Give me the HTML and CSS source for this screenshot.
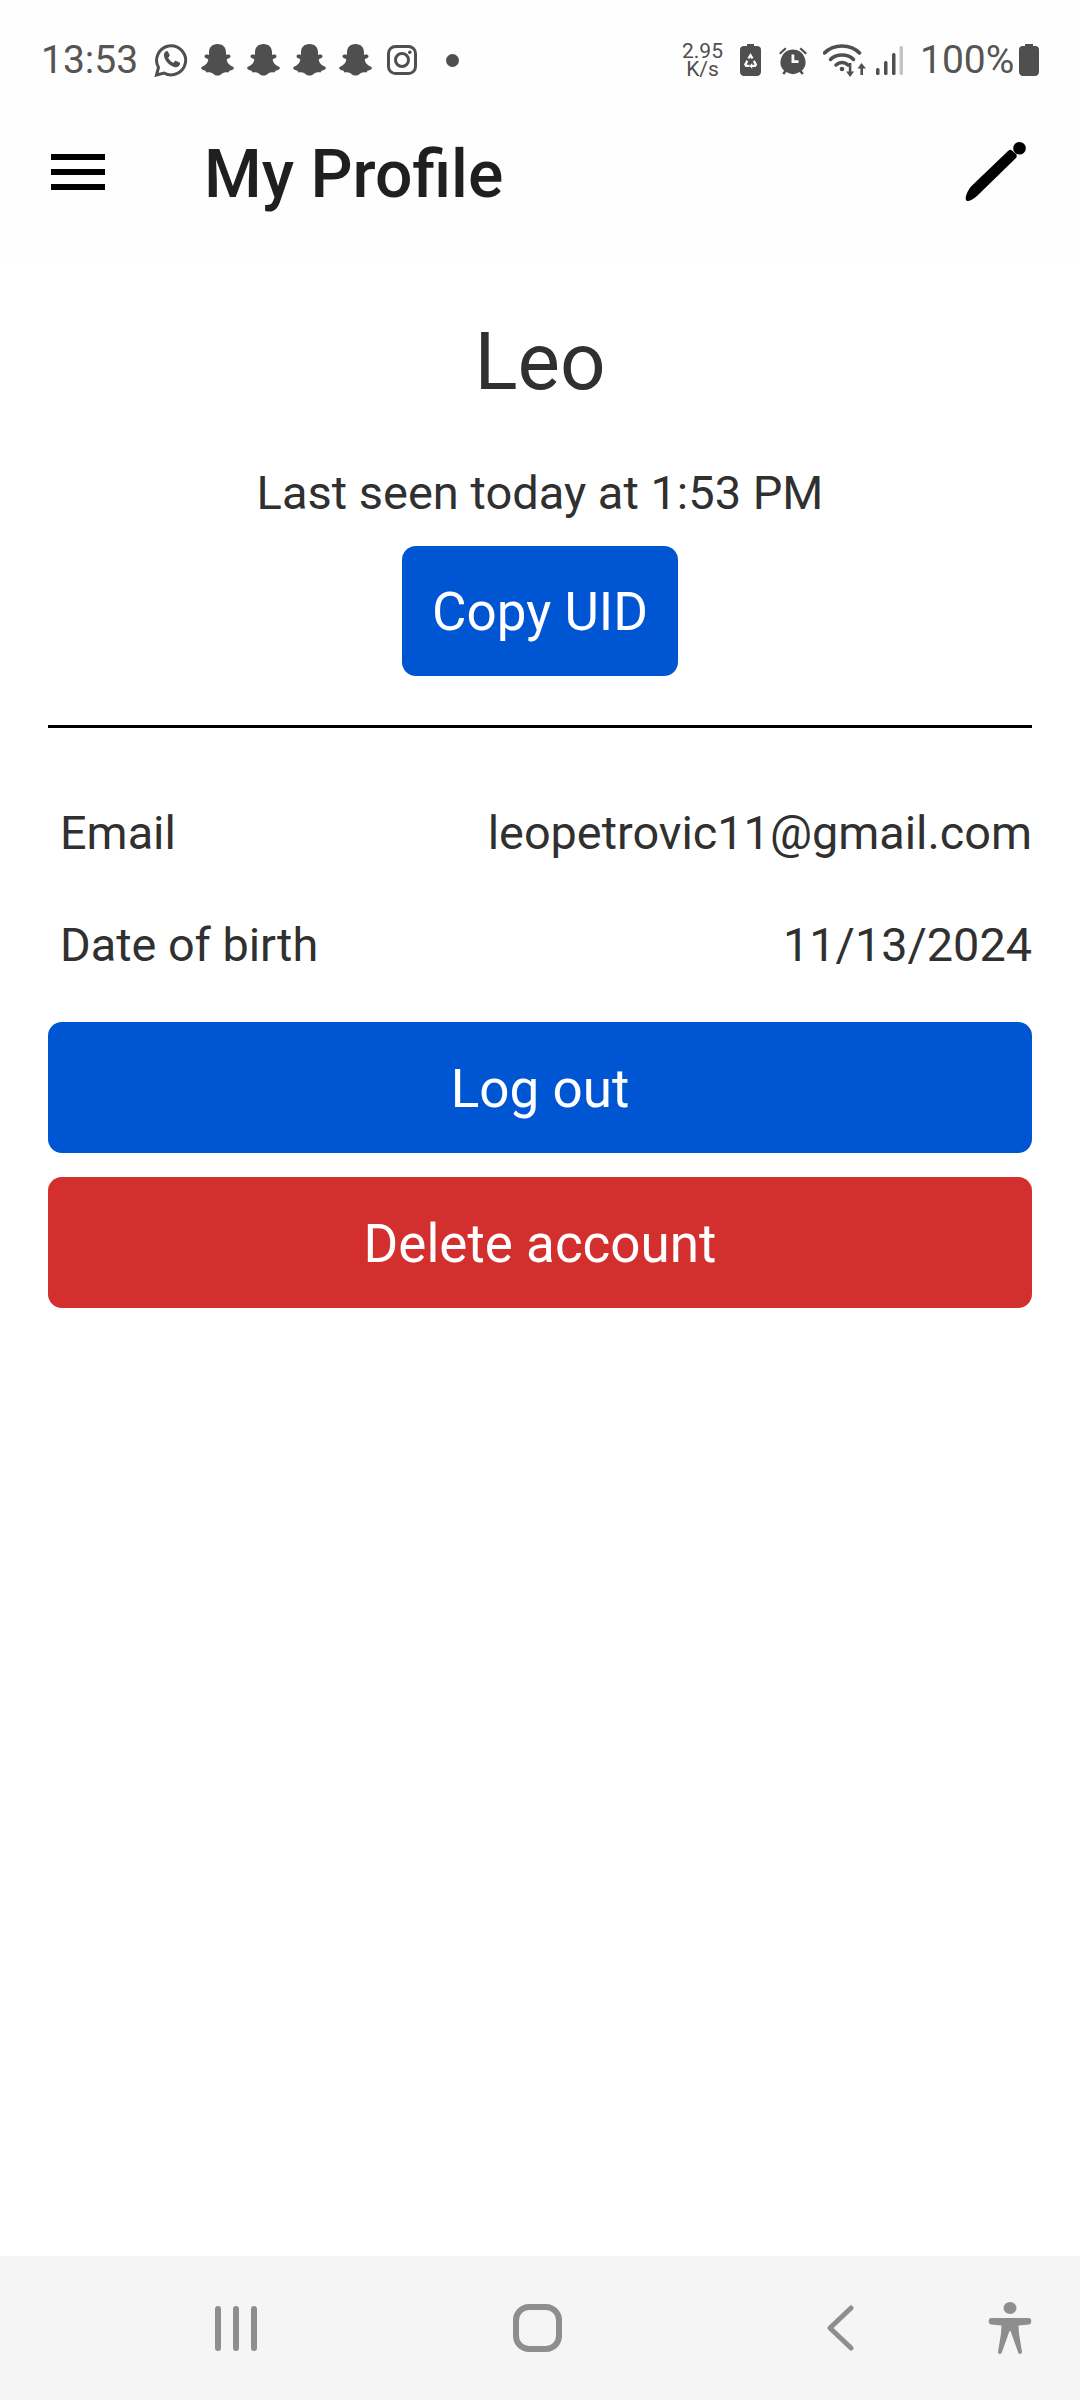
FILE: index.html
```html
<!DOCTYPE html>
<html lang="en">
<head>
<meta charset="utf-8">
<title>My Profile</title>
<link rel="stylesheet" href="styles.css">
</head>
<body>
<svg class="defs" width="0" height="0" aria-hidden="true">
  <symbol id="ghost" viewBox="0 0 33 32">
    <path d="M16.500 0C11 0 8 3.500 8 8.500V11C6.500 10.300 4 10.500 3.500 12 3.200 13.500 5 14.500 7.200 15.200 7.500 18 5 21 .6 23-.3 24 .3 25.500 2 26l2.500.8 1 1.800c2-.5 4-.5 5.500.3 2 1.600 3.500 2.600 5.500 2.600s3.500-1 5.500-2.600c1.500-.8 3.500-.8 5.500-.3l1-1.800L31 26c1.700-.5 2.300-2 1.400-3-4.400-2-6.900-5-6.600-7.800C28 14.500 29.800 13.500 29.500 12 29 10.500 26.500 10.300 25 11V8.500C25 3.500 22 0 16.500 0z"/>
  </symbol>
</svg>

<header class="status">
  <span class="clock">13:53</span>
  <svg class="ic whatsapp" viewBox="0 0 34 33">
    <path class="line" d="M2.500 31l2-7.500A14.500 14.500 0 1 1 10 29z"/>
    <path d="M11.500 7.500c.8-.7 1.900-.8 2.400 0l1.700 3.500c.2.500 0 1-.4 1.400l-1.100 1.300c1.200 2.300 3 4 5.300 5.100l1.400-1.600c.4-.4.900-.5 1.400-.3l3.300 1.600c.6.300.7 1 .4 2-.6 1.800-2.700 3-4.500 2.700-5.500-.9-10.300-5.800-11.400-10.900-.4-1.900.4-3.800 1.500-4.800z"/>
  </svg>
  <svg class="ic ghost g1"><use href="#ghost"/></svg>
  <svg class="ic ghost g2"><use href="#ghost"/></svg>
  <svg class="ic ghost g2"><use href="#ghost"/></svg>
  <svg class="ic ghost g2"><use href="#ghost"/></svg>
  <svg class="ic insta" viewBox="0 0 30 30">
    <rect class="line" x="1.500" y="1.500" width="27" height="27" rx="7"/>
    <circle class="line" cx="15" cy="15" r="6.500"/>
    <circle cx="22.800" cy="7.200" r="1.800"/>
  </svg>
  <span class="dot"></span>
  <span class="spacer"></span>
  <span class="speed"><span>2.95</span><span>K/s</span></span>
  <svg class="ic batsave" viewBox="0 0 21 32">
    <path fill-rule="evenodd" d="M7 0h7v2h3c2.300 0 4 1.500 4 3.500V28c0 2.300-1.700 4-4 4H4c-2.300 0-4-1.700-4-4V5.500C0 3.500 1.700 2 4 2h3zM10.500 9 7.500 14l2 1.100 1-1.900 1 1.900 2-1.100zM6.500 16 4 20.500 5.500 23h4v-2.200H6.700l1.500-3.600zM14.700 16.300l-1.800 1 1.700 3.500h-2.400V19l-2.700 3 2.700 3v-2h3.500l1.500-2.500z"/>
  </svg>
  <svg class="ic alarm" viewBox="0 0 30 29">
    <path fill-rule="evenodd" d="M15 3.500a12.500 12.500 0 0 1 8.800 21.300l2 2.400-2 1.600-2.200-2.700a12.500 12.500 0 0 1-13.200 0l-2.200 2.700-2-1.600 2-2.400A12.500 12.500 0 0 1 15 3.500zm-1.500 5v8.500h7v-2.800h-4.200V8.500z"/>
    <path d="M1 7 7 1.500 8.500 3 2.500 8.500zM29 7 23 1.500 21.500 3l6 5.500z"/>
  </svg>
  <svg class="ic wifi" viewBox="0 0 44 33">
    <path class="arc" d="M1.500 9C10-.5 28-.5 36.500 9"/>
    <path class="arc" d="M7.500 15.500C13 9.500 25 9.500 30.500 15.500"/>
    <path class="arc" d="M13 21C16.500 17.500 21.500 17.500 25 21"/>
    <circle cx="19" cy="25" r="2.300"/>
    <path d="M25.800 19h2.600v8.500h2.700L27.100 33l-4-5.500h2.700zM38.500 19l4.500 5.500h-3V31h-2.600v-6.500H34.500z"/>
  </svg>
  <svg class="ic signal" viewBox="0 0 27 29">
    <rect x="0" y="22" width="3.500" height="7" rx="1.500"/>
    <rect x="8" y="15" width="3.500" height="14" rx="1.500"/>
    <rect x="16" y="7" width="3.500" height="22" rx="1.500"/>
    <rect class="dim" x="23.500" y="0" width="3.500" height="29" rx="1.500"/>
  </svg>
  <span class="pct">100%</span>
  <svg class="ic battery" viewBox="0 0 20 32">
    <path d="M6 0h8v2h2.500C18.500 2 20 3.500 20 5.500V28c0 2.300-1.700 4-4 4H4c-2.300 0-4-1.700-4-4V5.500C0 3.500 1.500 2 3.500 2H6z"/>
  </svg>
</header>

<nav class="appbar">
  <div class="burger"><span></span><span></span><span></span></div>
  <h1 class="title">My Profile</h1>
  <svg class="pencil" viewBox="0 0 60 60">
    <path d="M42 9C44 7.500 45 7.500 46 8.500L50 12C51 13 51 14.500 50 16L11.500 53.500C8 57 4 59 1.500 59-.5 59-.5 56 0 54 1 50 3 47 5 44.500z"/>
    <circle cx="53.500" cy="6.300" r="6.300"/>
  </svg>
</nav>

<main class="profile">
  <h2 class="name">Leo</h2>
  <p class="seen">Last seen today at 1:53 PM</p>
  <button class="btn copy">Copy UID</button>
  <hr class="rule">
  <div class="row row-email"><span>Email</span><span>leopetrovic11@gmail.com</span></div>
  <div class="row row-dob"><span>Date of birth</span><span>11/13/2024</span></div>
  <button class="btn wide logout">Log out</button>
  <button class="btn wide delete">Delete account</button>
</main>

<footer class="navbar">
  <div class="recents"><span></span><span></span><span></span></div>
  <span class="home"></span>
  <svg class="back" viewBox="0 0 28 46"><path d="M25 3 4 23l21 20"/></svg>
  <svg class="access" viewBox="0 0 44 52">
    <ellipse cx="22" cy="6" rx="6.500" ry="6"/>
    <path d="M3 16h38c3 0 3 6.500 0 6.500l-10.500 1 .5 8L34 50c0 2.500-3.500 2.500-4 0l-7.500-21h-1L14 50c-.5 2.500-4 2.500-4 0l3-18.500.5-8L3 22.500c-3 0-3-6.500 0-6.500z"/>
  </svg>
</footer>
</body>
</html>
```

FILE: styles.css
```css
* { box-sizing: border-box; }
html, body { margin: 0; padding: 0; }
body {
  width: 1080px;
  height: 2400px;
  display: flex;
  flex-direction: column;
  background: #fefefe;
  font-family: Roboto, "Liberation Sans", sans-serif;
  color: #303030;
}
.defs { position: absolute; }

.status {
  height: 104px;
  padding: 16px 41px 0 41px;
  display: flex;
  align-items: center;
  color: #555;
  background: #fefefe;
}
.ic { display: block; fill: #4f4f4f; flex: none; }
.ic .line { fill: none; stroke: #4f4f4f; stroke-width: 3; }
.clock { font-size: 39px; width: 113px; flex: none; }
.whatsapp { width: 34px; height: 33px; }
.ghost { width: 33px; height: 32px; }
.g1 { margin-left: 13px; }
.g2 { margin-left: 13px; }
.insta { width: 30px; height: 30px; margin-left: 15px; }
.dot { width: 13px; height: 13px; border-radius: 50%; background: #4f4f4f; margin-left: 29px; flex: none; }
.spacer { flex: 1; }
.speed {
  display: flex;
  flex-direction: column;
  align-items: center;
  font-size: 21px;
  line-height: 18px;
  width: 41px;
  color: #4f4f4f;
}
.batsave { width: 21px; height: 32px; margin-left: 17px; }
.alarm { width: 30px; height: 29px; margin-left: 17px; }
.wifi { width: 44px; height: 33px; margin-left: 15px; }
.wifi .arc { fill: none; stroke: #4f4f4f; stroke-width: 3.500; stroke-linecap: round; }
.signal { width: 27px; height: 29px; margin-left: 9px; }
.signal .dim { fill: #c4c4c4; }
.pct { font-size: 39px; margin-left: 17px; width: 95px; flex: none; color: #555; }
.battery { width: 20px; height: 32px; margin-left: 4px; }

.appbar {
  height: 152px;
  padding: 0 54px 0 51px;
  display: flex;
  align-items: center;
  background: #fefefe;
  box-shadow: 0 1px 8px rgba(0, 0, 0, .012);
  z-index: 1;
}
.burger { width: 54px; display: flex; flex-direction: column; gap: 9px; margin-top: -16px; flex: none; }
.burger span { display: block; height: 6px; background: #000; }
.title {
  margin: -10px 0 0 99px;
  font-size: 66px;
  font-weight: 500;
  color: #1f1f1f;
  line-height: 80px;
  flex: 1;
}
.pencil { width: 60px; height: 60px; margin-top: -16px; fill: #000; flex: none; overflow: visible; }

.profile {
  flex: 1;
  padding: 0 48px;
  display: flex;
  flex-direction: column;
  align-items: center;
  background: #fff;
}
.name {
  margin: 64px 0 0;
  font-size: 80px;
  font-weight: 400;
  line-height: 84px;
}
.seen {
  margin: 63px 0 0;
  font-size: 47px;
  line-height: 52px;
}
.btn {
  border: 0;
  border-radius: 14px;
  color: #fff;
  font-family: inherit;
  font-size: 53px;
  background: #0056d2;
  padding: 2px 0 0;
  display: block;
}
.copy { width: 276px; height: 130px; margin-top: 27px; }
.rule { width: 100%; height: 3px; margin: 49px 0 0; border: 0; background: #000; }
.row {
  width: 100%;
  display: flex;
  justify-content: space-between;
  padding-left: 12px;
  font-size: 46.800px;
  line-height: 52px;
}
.row-email { margin-top: 79px; }
.row-dob { margin-top: 60px; }
.wide { width: 100%; height: 131px; }
.logout { margin-top: 51px; }
.delete { margin-top: 24px; background: #d32f2f; }

.navbar {
  height: 144px;
  background: #f5f5f5;
  display: flex;
  align-items: center;
  padding: 0 48px 0 215px;
}
.recents { display: flex; gap: 12px; width: 43px; flex: none; }
.recents span { width: 6px; height: 45px; border-radius: 3px; background: #8e8e8e; }
.home {
  width: 49px;
  height: 48px;
  border: 6px solid #8e8e8e;
  border-radius: 16px;
  margin-left: 255px;
  flex: none;
}
.back { width: 28px; height: 46px; margin-left: 264px; fill: none; stroke: #8e8e8e; stroke-width: 5; stroke-linecap: round; stroke-linejoin: round; flex: none; }
.access { width: 44px; height: 52px; margin-left: 134px; fill: #8e8e8e; flex: none; }
```
